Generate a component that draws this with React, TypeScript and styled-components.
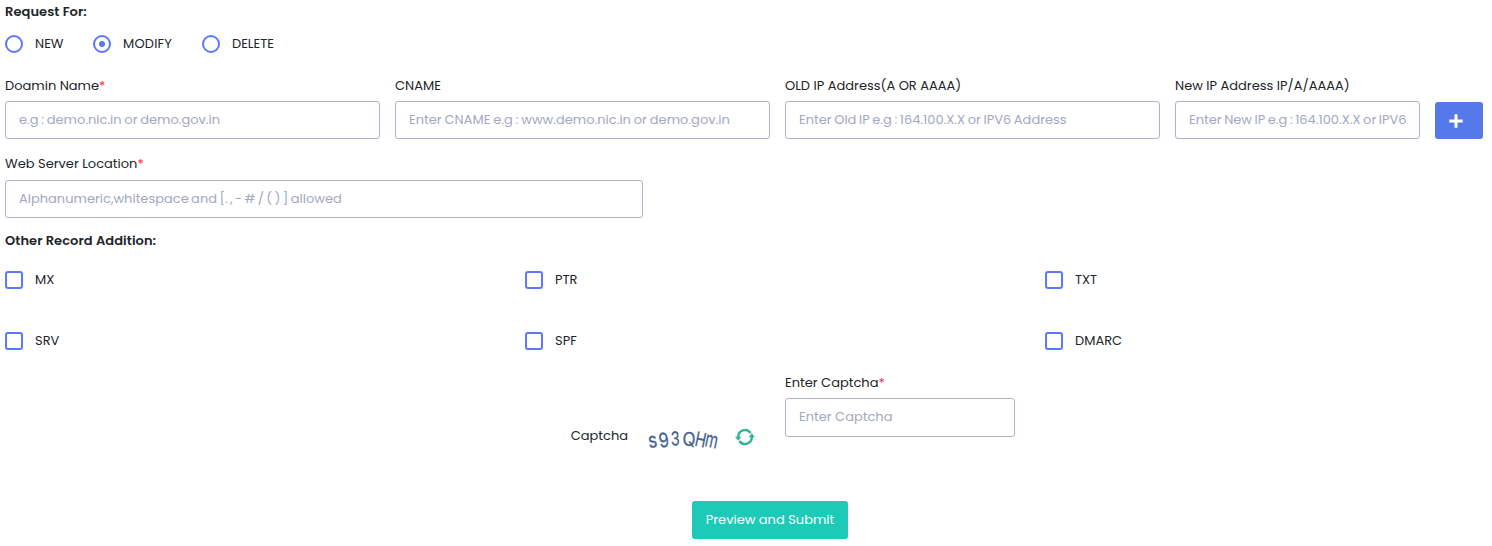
import React, { useState } from "react";
import styled, { createGlobalStyle } from "styled-components";

const GlobalStyle = createGlobalStyle`
  *, *::before, *::after { box-sizing: border-box; }
  body { margin: 0; background: #fff; color: #212529; }
  body, input, button { font-family: Poppins, Inter, "Open Sans", sans-serif; font-size: 13px; }
`;

const Form = styled.form`
  display: flex;
  flex-direction: column;
  width: 1492px;
  height: 546px;
  padding: 2px 9px 0 5px;
  overflow: hidden;
  & > * { flex: none; }
`;

const Heading = styled.div`
  height: 20px;
  line-height: 20px;
  font-weight: 600;
  letter-spacing: 0.08px;
`;

const Label = styled.label`
  display: block;
  height: 20px;
  line-height: 20px;
  white-space: nowrap;
`;

const Required = styled.span`
  color: #fd2b46;
`;

const RadioRow = styled.div`
  display: flex;
  height: 20px;
  margin-top: 12px;
`;

const Choice = styled.label<{ $width?: number; $track?: number }>`
  display: flex;
  align-items: center;
  gap: 12px;
  width: ${(p) => (p.$width ? `${p.$width}px` : "auto")};
  height: 20px;
  line-height: 20px;
  letter-spacing: ${(p) => p.$track ?? 0}px;
`;

const Mark = styled.input<{ $round?: boolean }>`
  appearance: none;
  flex: none;
  width: 18px;
  height: 18px;
  margin: 0;
  border: 2px solid #5d78ff;
  border-radius: ${(p) => (p.$round ? "50%" : "3px")};
  background: #fff;
  &:checked {
    background: ${(p) => (p.$round ? "radial-gradient(circle, #5d78ff 2.7px, #fff 3.4px)" : "#5d78ff")};
  }
`;

const FieldRow = styled.div`
  display: flex;
  align-items: flex-end;
  gap: 15px;
  margin-top: 22px;
`;

const Field = styled.div<{ $width: number; $gap?: number }>`
  display: flex;
  flex-direction: column;
  gap: ${(p) => p.$gap ?? 5}px;
  width: ${(p) => p.$width}px;
`;

const Input = styled.input<{ $word?: number; $tall?: boolean }>`
  width: 100%;
  height: ${(p) => (p.$tall ? 39 : 38)}px;
  padding: ${(p) => (p.$tall ? "0 13px 2px" : "0 13px")};
  border: 1px solid #afb2c9;
  border-radius: 3px;
  background: #fff;
  color: #495057;
  outline: none;
  word-spacing: ${(p) => p.$word ?? 0}px;
  &::placeholder { color: #a1a8c3; opacity: 1; }
`;

const AddButton = styled.button`
  display: flex;
  align-items: center;
  justify-content: center;
  width: 48px;
  height: 37px;
  padding: 0 6px 0 0;
  border: 0;
  border-radius: 3px;
  background: #5578eb;
`;

const LocationBlock = styled.div`
  margin: 15px 0 13px;
`;

const Records = styled.div`
  display: grid;
  grid-template-columns: 520px 520px 1fr;
  row-gap: 41px;
  margin-top: 19px;
`;

const CaptchaRow = styled.div`
  display: flex;
  height: 65px;
  margin-top: 22px;
`;

const CaptchaChallenge = styled.div`
  display: flex;
  justify-content: flex-end;
  align-items: flex-start;
  width: 780px;
  padding: 53px 30px 0 0;
`;

const CaptchaImage = styled.svg`
  width: 80px;
  height: 30px;
  margin: -2px 11px 0 16px;
`;

const RefreshButton = styled.button`
  display: flex;
  width: 20px;
  height: 18px;
  padding: 0;
  border: 0;
  margin-top: 2px;
  background: none;
`;

const SubmitButton = styled.button`
  align-self: center;
  width: 156px;
  height: 38px;
  margin: 63px 0 0 52px;
  padding: 0;
  border: 0;
  border-radius: 3px;
  background: #1dc9b7;
  color: #fff;
`;

const glyphs = [
  { c: "s", x: 5, y: 24, r: -8, s: 21, w: 0.82 },
  { c: "9", x: 16, y: 24, r: -10, s: 20, w: 0.82 },
  { c: "3", x: 27, y: 21.5, r: -2, s: 19, w: 0.76 },
  { c: "Q", x: 38.5, y: 21.5, r: 0, s: 18, w: 0.95 },
  { c: "H", x: 50, y: 21.5, r: 12, s: 20, w: 0.72 },
  { c: "m", x: 60, y: 22, r: 12, s: 22, w: 0.66 },
];

const requests = [
  { name: "NEW", width: 88, track: 0 },
  { name: "MODIFY", width: 109, track: 0.2 },
  { name: "DELETE", width: 80, track: 0 },
];

const records = ["MX", "PTR", "TXT", "SRV", "SPF", "DMARC"];

export default function App() {
  const [request, setRequest] = useState("MODIFY");
  return (
    <Form onSubmit={(e) => e.preventDefault()}>
      <GlobalStyle />
      <Heading>Request For:</Heading>
      <RadioRow>
        {requests.map((r) => (
          <Choice key={r.name} $width={r.width} $track={r.track}>
            <Mark $round type="radio" name="request" checked={request === r.name} onChange={() => setRequest(r.name)} />
            {r.name}
          </Choice>
        ))}
      </RadioRow>
      <FieldRow>
        <Field $width={375}>
          <Label>Doamin Name<Required>*</Required></Label>
          <Input $word={-0.8} placeholder="e.g : demo.nic.in or demo.gov.in" />
        </Field>
        <Field $width={375}>
          <Label>CNAME</Label>
          <Input $word={-0.6} placeholder="Enter CNAME e.g : www.demo.nic.in or demo.gov.in" />
        </Field>
        <Field $width={375}>
          <Label>OLD IP Address(A OR AAAA)</Label>
          <Input $word={-0.9} placeholder="Enter Old IP e.g : 164.100.X.X or IPV6 Address" />
        </Field>
        <Field $width={245}>
          <Label>New IP Address IP/A/AAAA)</Label>
          <Input $word={-0.95} placeholder="Enter New IP e.g : 164.100.X.X or IPV6 Address" />
        </Field>
        <AddButton type="button" aria-label="Add">
          <svg width="14" height="14" viewBox="0 0 14 14">
            <path d="M7 0.3V13.7M0.3 7H13.7" stroke="#fff" strokeWidth="3" />
          </svg>
        </AddButton>
      </FieldRow>
      <LocationBlock>
        <Field $width={638} $gap={6}>
          <Label>Web Server Location<Required>*</Required></Label>
          <Input $word={-1.1} placeholder="Alphanumeric,whitespace and [. , - # / ( ) ] allowed" />
        </Field>
      </LocationBlock>
      <Heading>Other Record Addition:</Heading>
      <Records>
        {records.map((r) => (
          <Choice key={r}>
            <Mark type="checkbox" />
            {r}
          </Choice>
        ))}
      </Records>
      <CaptchaRow>
        <CaptchaChallenge>
          <Label>Captcha</Label>
          <CaptchaImage viewBox="0 0 80 30" fontFamily="Inter, sans-serif">
            {glyphs.map((g) => (
              <text
                key={g.c}
                fill="#45618f"
                stroke="#45618f"
                strokeWidth={0.25}
                fontSize={g.s}
                transform={`translate(${g.x} ${g.y}) rotate(${g.r}) scale(${g.w} 1)`}
              >
                {g.c}
              </text>
            ))}
          </CaptchaImage>
          <RefreshButton type="button" aria-label="Refresh captcha">
            <svg width="20" height="18" viewBox="0 0 20 18">
              <g fill="none" stroke="#35b39c" strokeWidth="2.5">
                <path d="M15.6 5A6.8 6.8 0 0 0 3.2 9.2M4.4 13A6.8 6.8 0 0 0 16.8 8.8" />
              </g>
              <path fill="#35b39c" d="M0 8.8H6.4L3.2 12.8ZM13.6 9.2H20L16.8 5.2Z" />
            </svg>
          </RefreshButton>
        </CaptchaChallenge>
        <Field $width={230}>
          <Label>Enter Captcha<Required>*</Required></Label>
          <Input $tall placeholder="Enter Captcha" />
        </Field>
      </CaptchaRow>
      <SubmitButton type="submit">Preview and Submit</SubmitButton>
    </Form>
  );
}
